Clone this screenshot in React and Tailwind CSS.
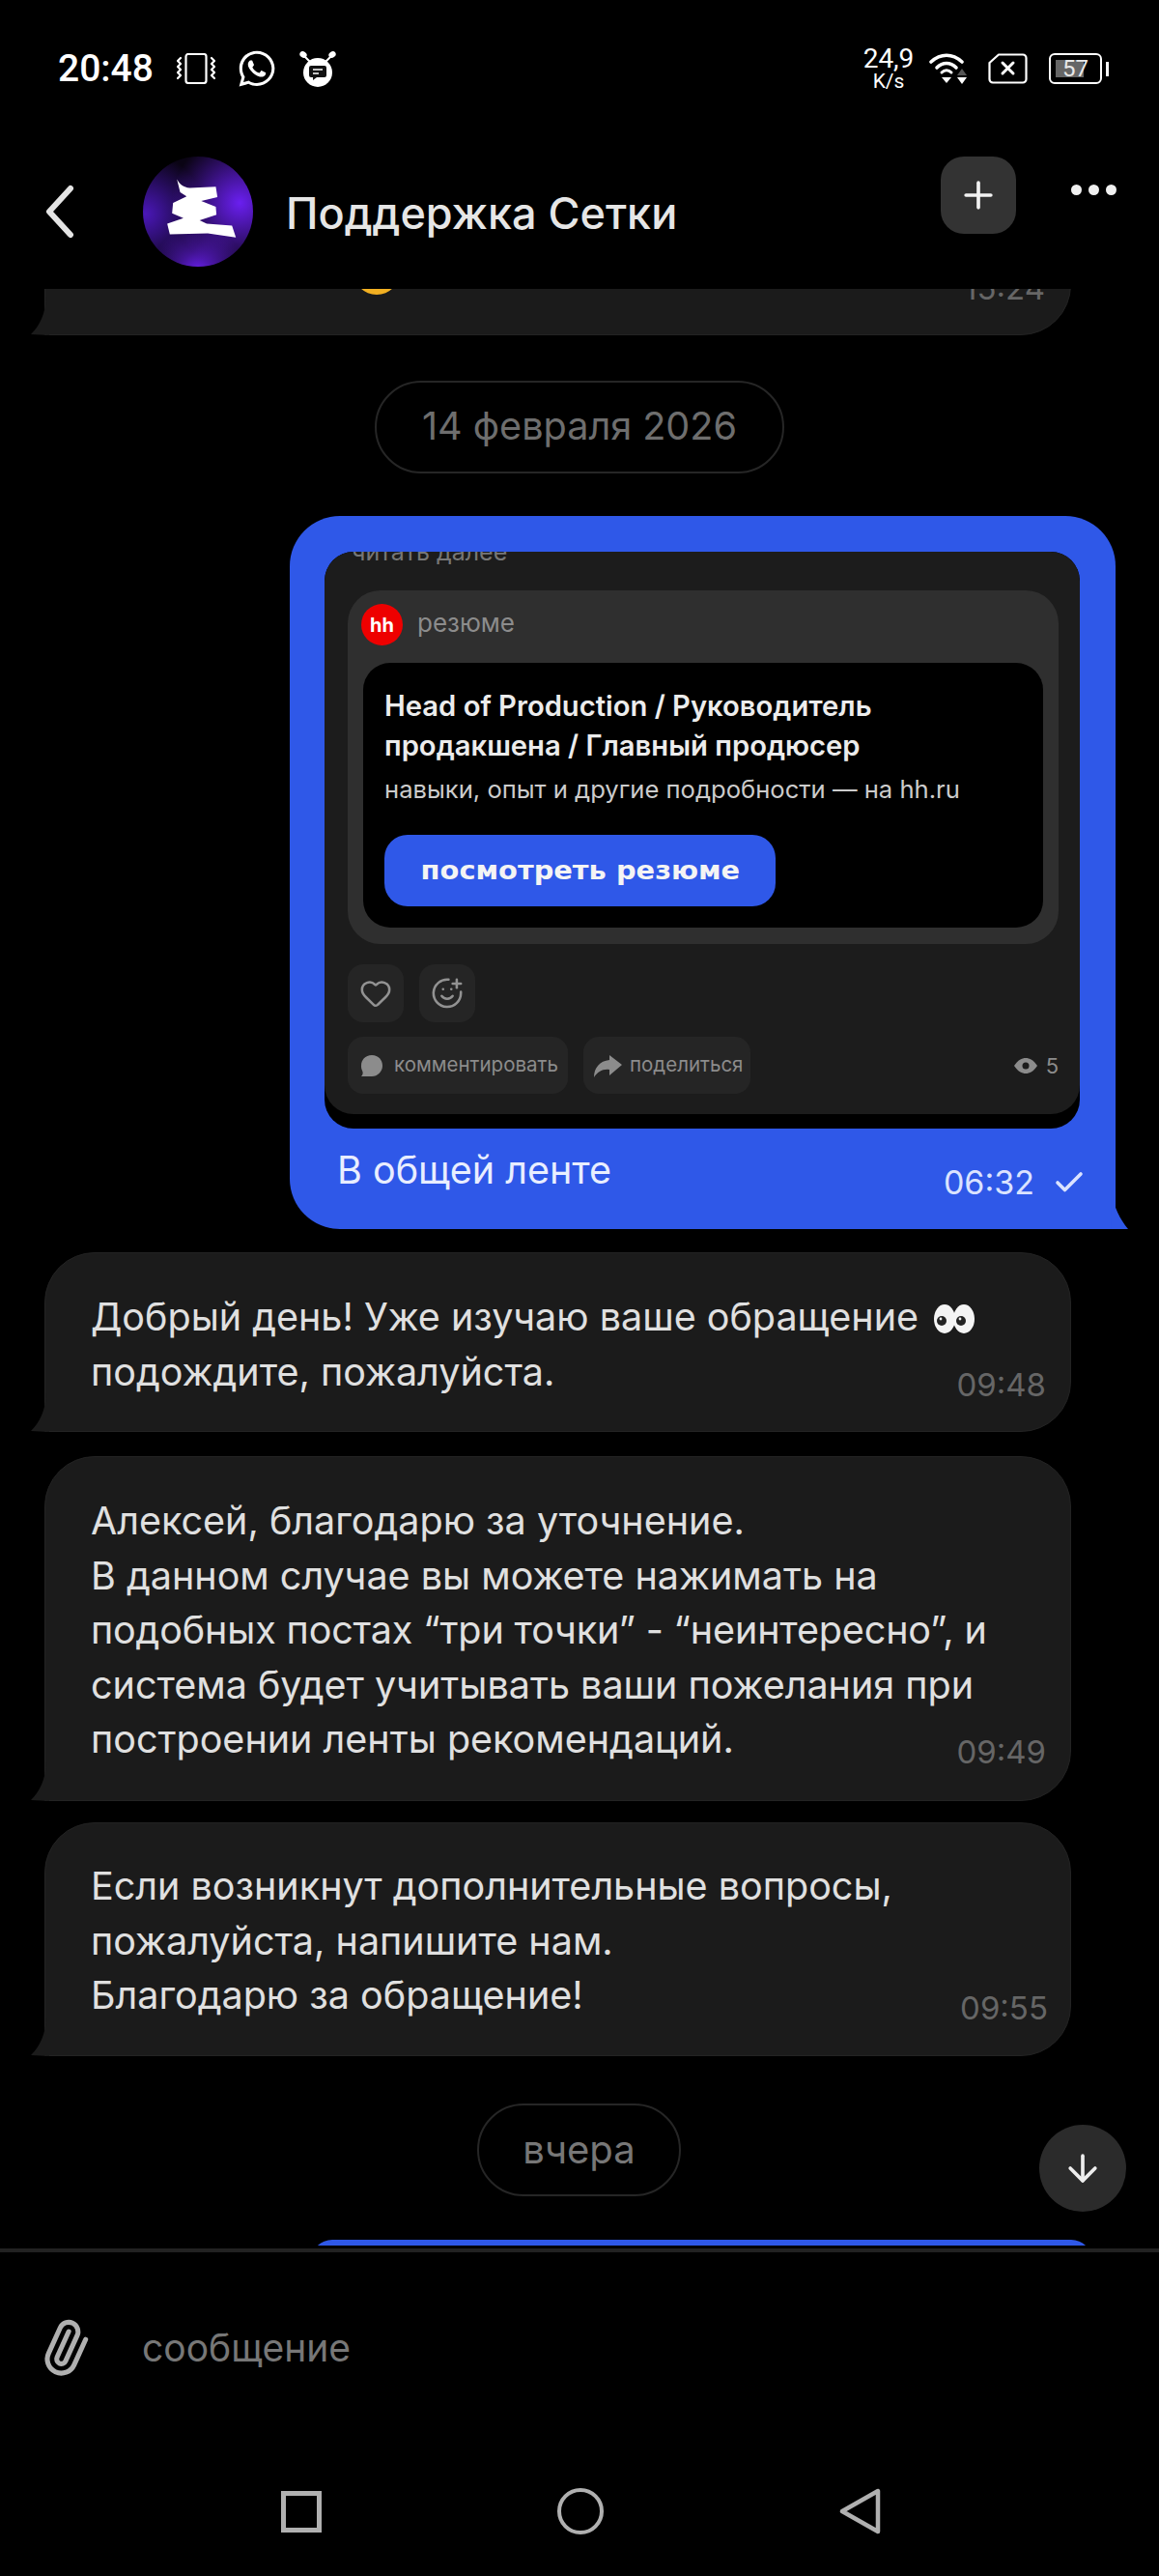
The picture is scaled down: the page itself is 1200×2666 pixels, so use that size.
import React from "react";
import { ArrowDown, Check, Heart, Paperclip, Plus, SmilePlus } from "lucide-react";
import { FaWhatsapp } from "react-icons/fa";

function Vibrate() {
  return (
    <svg width="40" height="32" viewBox="0 0 40 32" fill="none" stroke="white" strokeWidth="2.2" strokeLinecap="round" strokeLinejoin="round">
      <rect x="9.5" y="1" width="21" height="30" rx="2.5" />
      <path d="M4 5 L1 8 L4 11 L1 14 L4 17 L1 20 L4 23 L1 26" />
      <path d="M36 5 L39 8 L36 11 L39 14 L36 17 L39 20 L36 23 L39 26" />
    </svg>
  );
}

function Bear() {
  return (
    <svg width="40" height="38" viewBox="0 0 40 38">
      <ellipse cx="5" cy="4.5" rx="3.8" ry="3.2" fill="white" transform="rotate(35 5 4.5)" />
      <ellipse cx="35" cy="4.5" rx="3.8" ry="3.2" fill="white" transform="rotate(-35 35 4.5)" />
      <path d="M6 6 L12 12 M34 6 L28 12" stroke="white" strokeWidth="2" />
      <circle cx="20" cy="23" r="15" fill="white" />
      <path d="M13 16 H27 A2 2 0 0 1 29 18 V26 A2 2 0 0 1 27 28 H19 L15 31 V28 H13 A2 2 0 0 1 11 26 V18 A2 2 0 0 1 13 16 Z" fill="#111" />
      <path d="M15 20 H25 M15 24 H21" stroke="white" strokeWidth="1.6" />
    </svg>
  );
}

function Wifi() {
  return (
    <svg width="40" height="32" viewBox="0 0 40 32" fill="none">
      <path d="M2 9 C12 0 24 0 34 9" stroke="white" strokeWidth="3.6" strokeLinecap="round" />
      <path d="M8 15 C14 9 22 9 28 15" stroke="white" strokeWidth="3.6" strokeLinecap="round" />
      <path d="M13 20 C16 17 20 17 23 20" stroke="white" strokeWidth="3" strokeLinecap="round" />
      <path d="M13 25 H23 L18 31 Z" fill="white" />
      <path d="M34 16 L39 23 H29 Z" fill="#555" />
      <path d="M29 25 H39 L34 32 Z" fill="white" />
    </svg>
  );
}

function Sim() {
  return (
    <svg width="41" height="32" viewBox="0 0 41 32" fill="none" stroke="white">
      <path d="M11 1.5 H36 A3.5 3.5 0 0 1 39.5 5 V27 A3.5 3.5 0 0 1 36 30.5 H5 A3.5 3.5 0 0 1 1.5 27 V10 Z" strokeWidth="2.2" strokeLinejoin="round" />
      <path d="M15 10 L26 21 M26 10 L15 21" strokeWidth="3" strokeLinecap="round" />
    </svg>
  );
}

function Avatar() {
  return (
    <svg width="114" height="114" viewBox="0 0 340 340" className="shrink-0">
      <defs>
        <radialGradient id="glowR" cx="0.88" cy="0.42" r="0.62">
          <stop offset="0" stopColor="#6a1ff0" />
          <stop offset="1" stopColor="#6a1ff0" stopOpacity="0" />
        </radialGradient>
        <radialGradient id="glowB" cx="0.5" cy="1.05" r="0.42">
          <stop offset="0" stopColor="#6a1ff0" />
          <stop offset="1" stopColor="#6a1ff0" stopOpacity="0" />
        </radialGradient>
        <radialGradient id="glowL" cx="0.02" cy="0.52" r="0.55">
          <stop offset="0" stopColor="#4a17b8" />
          <stop offset="1" stopColor="#4a17b8" stopOpacity="0" />
        </radialGradient>
      </defs>
      <circle cx="170" cy="170" r="170" fill="#0a0414" />
      <circle cx="170" cy="170" r="170" fill="url(#glowL)" />
      <circle cx="170" cy="170" r="170" fill="url(#glowR)" />
      <circle cx="170" cy="170" r="170" fill="url(#glowB)" />
      <g transform="translate(-25 -25)">
        <path
          d="M130 95 C138 110 150 120 170 122 L250 118 L255 150 L205 162 L250 180 L252 205 L200 222 L222 232 L300 238 L312 275 L225 262 L108 265 L100 232 L150 215 L115 200 L118 168 L160 148 L140 135 Z"
          fill="white"
        />
      </g>
    </svg>
  );
}

function Tail({ side, color }) {
  if (side === "left") {
    return (
      <svg width="20" height="40" viewBox="0 0 20 40" className="absolute left-[-16px] bottom-[-1px]">
        <path d="M17 0 C16 18 10 30 1 39 L20 40 L20 0 Z" fill={color} />
      </svg>
    );
  }
  return (
    <svg width="20" height="40" viewBox="0 0 20 40" className="absolute right-[-15px] bottom-0">
      <path d="M1 0 C3 18 10 30 18 40 L0 40 Z" fill={color} />
    </svg>
  );
}

function Eyes() {
  return (
    <svg width="46" height="34" viewBox="0 0 46 34" className="ml-[14px] inline-block align-[-5px]">
      <ellipse cx="13" cy="17" rx="11" ry="15" fill="#f4f4f4" />
      <ellipse cx="33" cy="17" rx="11" ry="15" fill="#f4f4f4" />
      <circle cx="10" cy="19" r="5" fill="#222" />
      <circle cx="30" cy="19" r="5" fill="#222" />
      <circle cx="9" cy="17" r="1.4" fill="#eee" />
      <circle cx="29" cy="17" r="1.4" fill="#eee" />
    </svg>
  );
}

function GrayBubble({ lines, lastLine, time, height, top, right }) {
  return (
    <div
      className={`relative ml-[46px] w-[1063px] shrink-0 rounded-[52px] rounded-bl-none border border-[#232323] bg-[#1b1b1b] pl-[47px] text-[39.5px] leading-[56.5px] text-[#e0e0e0] ${height} ${top} ${right}`}
    >
      {lines.map((l, i) => (
        <div key={i} className="whitespace-nowrap">{l}</div>
      ))}
      <div className="flex items-start justify-between">
        <span className="whitespace-nowrap">{lastLine}</span>
        <span className="mt-[21px] text-[33px] leading-[40px] text-[#666666]">{time}</span>
      </div>
      <Tail side="left" color="#1b1b1b" />
    </div>
  );
}

export default function App() {
  return (
    <div className="flex h-[2666px] w-[1200px] flex-col overflow-hidden bg-black font-[family-name:Inter,sans-serif] text-white">
      {/* status bar */}
      <div className="flex h-[142px] shrink-0 items-center pl-[60px] pr-[52px]">
        <span className="w-[98px] font-[family-name:Roboto,sans-serif] text-[39px] font-medium leading-none">20:48</span>
        <div className="ml-[25px] flex items-center gap-[22px]">
          <Vibrate />
          <FaWhatsapp size={42} />
          <Bear />
        </div>
        <div className="ml-auto flex items-center font-[family-name:Roboto,sans-serif]">
          <div className="flex w-[50px] flex-col items-center">
            <span className="text-[28px] leading-[26px]">24,9</span>
            <span className="text-[21px] leading-[20px]">K/s</span>
          </div>
          <div className="ml-[17px]"><Wifi /></div>
          <div className="ml-[21px]"><Sim /></div>
          <div className="relative ml-[22px] flex h-[32px] w-[55px] items-center justify-center rounded-[6px] border-2 border-white">
            <div className="absolute left-[5px] top-[5px] h-[18px] w-[29px] bg-[#666666]" />
            <span className="relative text-[24px] leading-none text-[#e8e8e8]">57</span>
          </div>
          <div className="ml-[4px] h-[15px] w-[3px] bg-white" />
        </div>
      </div>

      {/* header */}
      <div className="relative flex h-[157px] shrink-0 items-start">
        <svg width="30" height="56" viewBox="0 0 30 56" className="ml-[47px] mt-[49px]" fill="none" stroke="#e4e4e4" strokeWidth="6" strokeLinecap="round" strokeLinejoin="round">
          <path d="M26 4 L4 28 L26 52" />
        </svg>
        <div className="ml-[71px] mt-[20px]"><Avatar /></div>
        <span className="ml-[34px] mt-[50px] whitespace-nowrap text-[45px] font-medium leading-[58px] text-[#e6e6e6]">Поддержка Сетки</span>
        <div className="ml-auto mt-[20px] flex h-[80px] w-[78px] items-center justify-center rounded-[24px] bg-[#333333]">
          <Plus size={44} strokeWidth={2} color="#f2f2f2" />
        </div>
        <div className="ml-[57px] mr-[44px] mt-[49px] flex gap-[7px]">
          <span className="h-[11px] w-[11px] rounded-full bg-[#f0f0f0]" />
          <span className="h-[11px] w-[11px] rounded-full bg-[#f0f0f0]" />
          <span className="h-[11px] w-[11px] rounded-full bg-[#f0f0f0]" />
        </div>
      </div>

      {/* messages */}
      <div className="relative flex h-[2025px] shrink-0 flex-col overflow-hidden">
        <div className="relative ml-[46px] mt-[-138px] flex h-[186px] w-[1063px] shrink-0 items-end justify-end overflow-visible rounded-[52px] rounded-bl-none border border-[#232323] bg-[#1b1b1b] pb-[28px] pr-[26px]">
          <div className="absolute left-[319px] top-[95px] h-[48px] w-[48px] rounded-full bg-[#f2b022]" />
          <span className="text-[33px] leading-[40px] text-[#666666]">15:24</span>
          <Tail side="left" color="#1b1b1b" />
        </div>

        <div className="ml-[388px] mt-[47px] flex h-[96px] w-[424px] shrink-0 items-center justify-center rounded-full border-2 border-[#262626] text-[39.6px] text-[#6e6e6e]">
          14 февраля 2026
        </div>

        {/* own bubble */}
        <div className="relative ml-[300px] mt-[44px] h-[738px] w-[855px] shrink-0 rounded-[52px] rounded-br-none bg-[#2f58e8] pl-[36px] pr-[37px] pt-[37px]">
          <div className="h-[597px] overflow-hidden rounded-[30px] bg-black">
            <div className="h-[582px] overflow-hidden rounded-[30px] bg-[#1c1c1c] pl-[24px] pr-[22px]">
              <div className="ml-[4px] mt-[-14px] text-[25px] leading-[28px] text-[#777777]">читать далее</div>
              <div className="mt-[26px] h-[366px] rounded-[34px] bg-[#2f2f2f] px-[16px] pt-[14px]">
                <div className="flex h-[43px] items-center">
                  <div className="ml-[-2px] flex h-[43px] w-[43px] items-center justify-center rounded-full bg-[#ee0000] text-[20px] font-bold leading-none text-white">hh</div>
                  <span className="ml-[15px] mt-[-4px] text-[26px] leading-none text-[#8c8c8c]">резюме</span>
                </div>
                <div className="mt-[18px] h-[274px] rounded-[28px] bg-black px-[22px] pt-[24px]">
                  <div className="text-[29.2px] font-semibold leading-[41px] text-[#ececec]">
                    <div className="whitespace-nowrap">Head of Production / Руководитель</div>
                    <div className="whitespace-nowrap">продакшена / Главный продюсер</div>
                  </div>
                  <div className="mt-[5px] whitespace-nowrap text-[25.6px] leading-[40px] text-[#cccccc]">навыки, опыт и другие подробности — на hh.ru</div>
                  <div className="mt-[27px] flex h-[74px] w-[405px] items-center justify-center rounded-[24px] bg-[#2f58e8] font-[family-name:DejaVu_Sans,sans-serif] text-[26px] font-bold text-[#f4f4f4]">
                    <span className="inline-block scale-x-[1.11] whitespace-nowrap">посмотреть резюме</span>
                  </div>
                </div>
              </div>
              <div className="mt-[21px] flex gap-[16px]">
                <div className="flex h-[60px] w-[58px] items-center justify-center rounded-[16px] bg-[#252525]">
                  <Heart size={34} strokeWidth={1.8} color="#929292" />
                </div>
                <div className="flex h-[60px] w-[58px] items-center justify-center rounded-[16px] bg-[#252525]">
                  <SmilePlus size={34} strokeWidth={1.8} color="#929292" />
                </div>
              </div>
              <div className="mt-[15px] flex h-[59px] items-center gap-[16px] text-[20.5px] text-[#8c8c8c]">
                <div className="flex h-[59px] w-[228px] items-center rounded-[16px] bg-[#252525] pl-[13px]">
                  <svg width="24" height="24" viewBox="0 0 24 24" className="shrink-0">
                    <path d="M12 1 C19 1 23 6 23 12 C23 18 18 23 12 23 L1 23 C3 21 3 19 2 17 C1 15 1 13 1 12 C1 6 5 1 12 1 Z" fill="#8c8c8c" />
                  </svg>
                  <span className="ml-[11px] whitespace-nowrap">комментировать</span>
                </div>
                <div className="flex h-[59px] w-[173px] items-center rounded-[16px] bg-[#252525] pl-[10px]">
                  <svg width="30" height="24" viewBox="0 0 30 24" className="shrink-0">
                    <path d="M17 1 L30 11 L17 22 L17 16 C10 15 5 18 1 24 C1 14 7 7 17 6 Z" fill="#8c8c8c" />
                  </svg>
                  <span className="ml-[8px] whitespace-nowrap">поделиться</span>
                </div>
                <div className="ml-auto flex items-center gap-[8px]">
                  <svg width="26" height="18" viewBox="0 0 26 18" className="shrink-0">
                    <path d="M1 9 C5 3 9 1 13 1 C17 1 21 3 25 9 C21 15 17 17 13 17 C9 17 5 15 1 9 Z" fill="#8c8c8c" />
                    <circle cx="13" cy="9" r="3.5" fill="#1c1c1c" />
                  </svg>
                  <span className="text-[22px] leading-none">5</span>
                </div>
              </div>
            </div>
          </div>
          <div className="ml-[13px] mr-[-7px] mt-[15px] flex items-start">
            <span className="text-[39.5px] leading-[56px] text-[#e9eeff]">В общей ленте</span>
            <span className="ml-auto mt-[21px] text-[34px] leading-[40px] text-[#dbe3ff]">06:32</span>
            <Check size={36} strokeWidth={2.4} color="#dbe3ff" className="ml-[18px] mt-[23px]" />
          </div>
          <Tail side="right" color="#2f58e8" />
        </div>

        <div className="mt-[24px] flex flex-col">
          <GrayBubble
            height="h-[186px]"
            top="pt-[38px]"
            right="pr-[25px]"
            lines={[<React.Fragment key="a">Добрый день! Уже изучаю ваше обращение<Eyes /></React.Fragment>]}
            lastLine="подождите, пожалуйста."
            time="09:48"
          />
          <div className="h-[25px] shrink-0" />
          <GrayBubble
            height="h-[357px]"
            top="pt-[38px]"
            right="pr-[25px]"
            lines={[
              "Алексей, благодарю за уточнение.",
              "В данном случае вы можете нажимать на",
              <span key="q" className="tracking-[-0.15px]">подобных постах “три точки” - “неинтересно”, и</span>,
              "система будет учитывать ваши пожелания при",
            ]}
            lastLine="построении ленты рекомендаций."
            time="09:49"
          />
          <div className="h-[22px] shrink-0" />
          <GrayBubble
            height="h-[242px]"
            top="pt-[37px]"
            right="pr-[23px]"
            lines={["Если возникнут дополнительные вопросы,", "пожалуйста, напишите нам."]}
            lastLine="Благодарю за обращение!"
            time="09:55"
          />
        </div>

        <div className="ml-[494px] mt-[49px] flex h-[96px] w-[211px] shrink-0 items-center justify-center rounded-full border-2 border-[#262626] text-[40px] text-[#777777]">
          вчера
        </div>

        <div className="ml-[322px] mt-[45px] h-[60px] w-[809px] shrink-0 rounded-t-[22px] bg-[#2f58e8]" />

        <div className="absolute left-[1076px] top-[1900px] flex h-[90px] w-[90px] items-center justify-center rounded-full bg-[#2b2b2b]">
          <ArrowDown size={44} strokeWidth={2} color="#eeeeee" />
        </div>
      </div>

      <div className="mt-[3px] h-[4px] shrink-0 bg-[#222222]" />

      {/* composer */}
      <div className="mt-[69px] flex h-[60px] shrink-0 items-center pl-[38px]">
        <Paperclip size={58} strokeWidth={2.1} color="#b0b0b0" className="rotate-[-20deg]" />
        <span className="ml-[51px] text-[39px] text-[#777777]">сообщение</span>
      </div>

      {/* navigation */}
      <div className="mt-[115px] flex items-center gap-[244px] pl-[291px]">
        <div className="h-[43px] w-[42px] border-[5px] border-[#b0b0b0]" />
        <div className="h-[48px] w-[48px] rounded-full border-[4px] border-[#b0b0b0]" />
        <svg width="43" height="48" viewBox="0 0 43 48" fill="none" stroke="#b0b0b0" strokeWidth="4.5" strokeLinejoin="round">
          <path d="M40 3 V45 L3 24 Z" />
        </svg>
      </div>
    </div>
  );
}
